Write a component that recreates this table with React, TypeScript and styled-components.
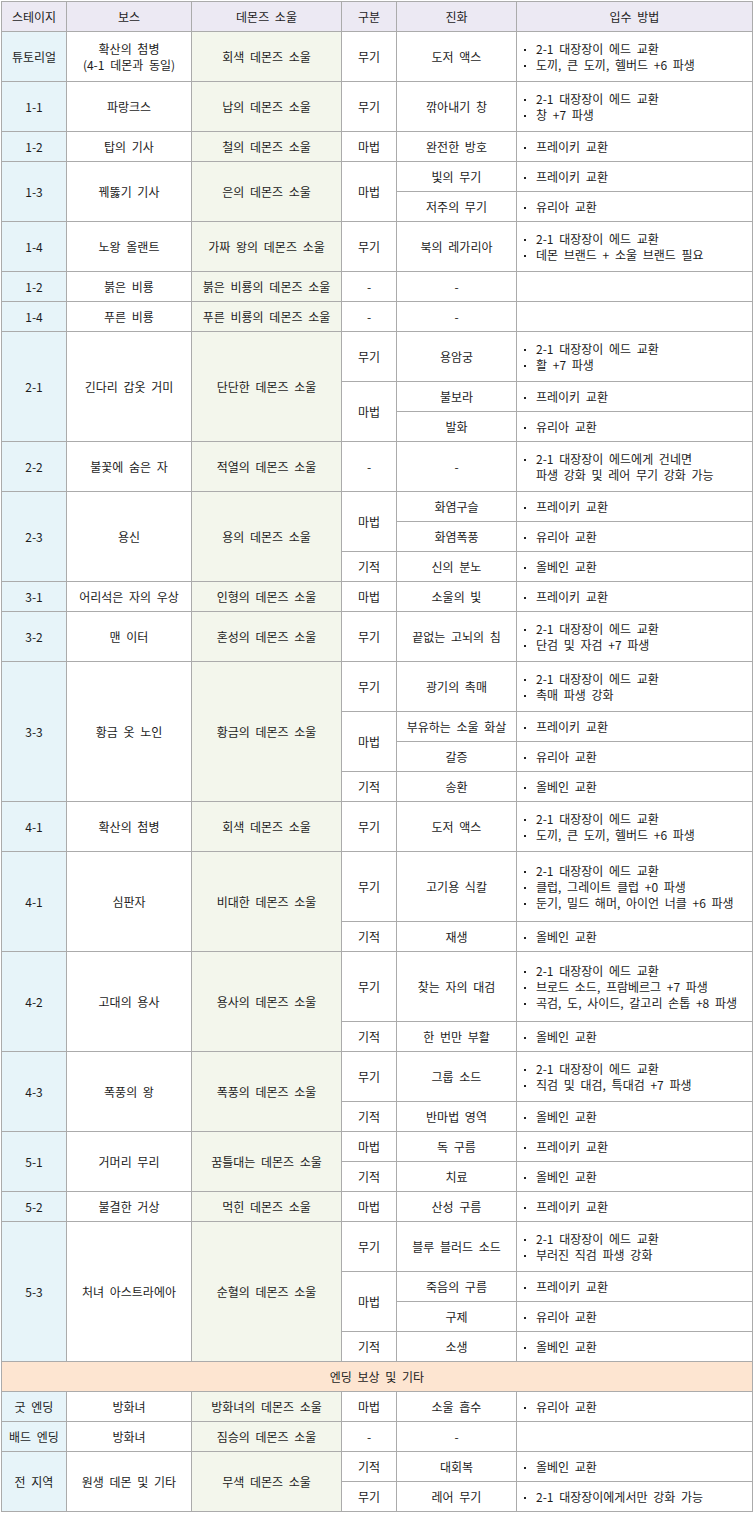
import React from "react";
import styled, { createGlobalStyle } from "styled-components";

type Sub = {
  kind?: string;
  kindSpan?: number;
  evo: string;
  how: string[];
  h: number;
};

type Group = {
  stage: string;
  boss: string[];
  soul: string;
  subs: Sub[];
};

const ED = "2-1 대장장이 에드 교환";

const groups: Group[] = [
  {
    stage: "튜토리얼",
    boss: ["확산의 첨병", "(4-1 데몬과 동일)"],
    soul: "회색 데몬즈 소울",
    subs: [{ kind: "무기", evo: "도저 액스", how: [ED, "도끼, 큰 도끼, 헬버드 +6 파생"], h: 50 }],
  },
  {
    stage: "1-1",
    boss: ["파랑크스"],
    soul: "납의 데몬즈 소울",
    subs: [{ kind: "무기", evo: "깎아내기 창", how: [ED, "창 +7 파생"], h: 50 }],
  },
  {
    stage: "1-2",
    boss: ["탑의 기사"],
    soul: "철의 데몬즈 소울",
    subs: [{ kind: "마법", evo: "완전한 방호", how: ["프레이키 교환"], h: 30 }],
  },
  {
    stage: "1-3",
    boss: ["꿰뚫기 기사"],
    soul: "은의 데몬즈 소울",
    subs: [
      { kind: "마법", kindSpan: 2, evo: "빛의 무기", how: ["프레이키 교환"], h: 30 },
      { evo: "저주의 무기", how: ["유리아 교환"], h: 30 },
    ],
  },
  {
    stage: "1-4",
    boss: ["노왕 올랜트"],
    soul: "가짜 왕의 데몬즈 소울",
    subs: [{ kind: "무기", evo: "북의 레가리아", how: [ED, "데몬 브랜드 + 소울 브랜드 필요"], h: 50 }],
  },
  {
    stage: "1-2",
    boss: ["붉은 비룡"],
    soul: "붉은 비룡의 데몬즈 소울",
    subs: [{ kind: "-", evo: "-", how: [], h: 30 }],
  },
  {
    stage: "1-4",
    boss: ["푸른 비룡"],
    soul: "푸른 비룡의 데몬즈 소울",
    subs: [{ kind: "-", evo: "-", how: [], h: 30 }],
  },
  {
    stage: "2-1",
    boss: ["긴다리 갑옷 거미"],
    soul: "단단한 데몬즈 소울",
    subs: [
      { kind: "무기", evo: "용암궁", how: [ED, "활 +7 파생"], h: 50 },
      { kind: "마법", kindSpan: 2, evo: "불보라", how: ["프레이키 교환"], h: 30 },
      { evo: "발화", how: ["유리아 교환"], h: 30 },
    ],
  },
  {
    stage: "2-2",
    boss: ["불꽃에 숨은 자"],
    soul: "적열의 데몬즈 소울",
    subs: [
      {
        kind: "-",
        evo: "-",
        how: ["2-1 대장장이 에드에게 건네면\n파생 강화 및 레어 무기 강화 가능"],
        h: 50,
      },
    ],
  },
  {
    stage: "2-3",
    boss: ["용신"],
    soul: "용의 데몬즈 소울",
    subs: [
      { kind: "마법", kindSpan: 2, evo: "화염구슬", how: ["프레이키 교환"], h: 30 },
      { evo: "화염폭풍", how: ["유리아 교환"], h: 30 },
      { kind: "기적", evo: "신의 분노", how: ["올베인 교환"], h: 30 },
    ],
  },
  {
    stage: "3-1",
    boss: ["어리석은 자의 우상"],
    soul: "인형의 데몬즈 소울",
    subs: [{ kind: "마법", evo: "소울의 빛", how: ["프레이키 교환"], h: 30 }],
  },
  {
    stage: "3-2",
    boss: ["맨 이터"],
    soul: "혼성의 데몬즈 소울",
    subs: [{ kind: "무기", evo: "끝없는 고뇌의 침", how: [ED, "단검 및 자검 +7 파생"], h: 50 }],
  },
  {
    stage: "3-3",
    boss: ["황금 옷 노인"],
    soul: "황금의 데몬즈 소울",
    subs: [
      { kind: "무기", evo: "광기의 촉매", how: [ED, "촉매 파생 강화"], h: 50 },
      { kind: "마법", kindSpan: 2, evo: "부유하는 소울 화살", how: ["프레이키 교환"], h: 30 },
      { evo: "갈증", how: ["유리아 교환"], h: 30 },
      { kind: "기적", evo: "송환", how: ["올베인 교환"], h: 30 },
    ],
  },
  {
    stage: "4-1",
    boss: ["확산의 첨병"],
    soul: "회색 데몬즈 소울",
    subs: [{ kind: "무기", evo: "도저 액스", how: [ED, "도끼, 큰 도끼, 헬버드 +6 파생"], h: 50 }],
  },
  {
    stage: "4-1",
    boss: ["심판자"],
    soul: "비대한 데몬즈 소울",
    subs: [
      {
        kind: "무기",
        evo: "고기용 식칼",
        how: [ED, "클럽, 그레이트 클럽 +0 파생", "둔기, 밀드 해머, 아이언 너클 +6 파생"],
        h: 70,
      },
      { kind: "기적", evo: "재생", how: ["올베인 교환"], h: 30 },
    ],
  },
  {
    stage: "4-2",
    boss: ["고대의 용사"],
    soul: "용사의 데몬즈 소울",
    subs: [
      {
        kind: "무기",
        evo: "찾는 자의 대검",
        how: [ED, "브로드 소드, 프람베르그 +7 파생", "곡검, 도, 사이드, 갈고리 손톱 +8 파생"],
        h: 70,
      },
      { kind: "기적", evo: "한 번만 부활", how: ["올베인 교환"], h: 30 },
    ],
  },
  {
    stage: "4-3",
    boss: ["폭풍의 왕"],
    soul: "폭풍의 데몬즈 소울",
    subs: [
      { kind: "무기", evo: "그룹 소드", how: [ED, "직검 및 대검, 특대검 +7 파생"], h: 50 },
      { kind: "기적", evo: "반마법 영역", how: ["올베인 교환"], h: 30 },
    ],
  },
  {
    stage: "5-1",
    boss: ["거머리 무리"],
    soul: "꿈틀대는 데몬즈 소울",
    subs: [
      { kind: "마법", evo: "독 구름", how: ["프레이키 교환"], h: 30 },
      { kind: "기적", evo: "치료", how: ["올베인 교환"], h: 30 },
    ],
  },
  {
    stage: "5-2",
    boss: ["불결한 거상"],
    soul: "먹힌 데몬즈 소울",
    subs: [{ kind: "마법", evo: "산성 구름", how: ["프레이키 교환"], h: 30 }],
  },
  {
    stage: "5-3",
    boss: ["처녀 아스트라에아"],
    soul: "순혈의 데몬즈 소울",
    subs: [
      { kind: "무기", evo: "블루 블러드 소드", how: [ED, "부러진 직검 파생 강화"], h: 50 },
      { kind: "마법", kindSpan: 2, evo: "죽음의 구름", how: ["프레이키 교환"], h: 30 },
      { evo: "구제", how: ["유리아 교환"], h: 30 },
      { kind: "기적", evo: "소생", how: ["올베인 교환"], h: 30 },
    ],
  },
];

const extras: Group[] = [
  {
    stage: "굿 엔딩",
    boss: ["방화녀"],
    soul: "방화녀의 데몬즈 소울",
    subs: [{ kind: "마법", evo: "소울 흡수", how: ["유리아 교환"], h: 30 }],
  },
  {
    stage: "배드 엔딩",
    boss: ["방화녀"],
    soul: "짐승의 데몬즈 소울",
    subs: [{ kind: "-", evo: "-", how: [], h: 30 }],
  },
  {
    stage: "전 지역",
    boss: ["원생 데몬 및 기타"],
    soul: "무색 데몬즈 소울",
    subs: [
      { kind: "기적", evo: "대회복", how: ["올베인 교환"], h: 30 },
      { kind: "무기", evo: "레어 무기", how: ["2-1 대장장이에게서만 강화 가능"], h: 30 },
    ],
  },
];

const GlobalStyle = createGlobalStyle`
  body {
    margin: 0;
    background: #fff;
    font-family: "Noto Sans CJK KR", "Noto Sans", sans-serif;
  }
`;

const Table = styled.table`
  margin: 1px 0 0 1px;
  width: 751px;
  table-layout: fixed;
  border-collapse: collapse;
  font-size: 12px;
  line-height: 16px;
  word-spacing: 3px;
  color: #1c1c1c;
`;

const Th = styled.th`
  height: 29px;
  padding: 0;
  border: 1px solid #ababab;
  background: #ece9f3;
  font-weight: normal;
  text-align: center;
`;

const Td = styled.td<{ $tone?: "stage" | "soul" | "plain" }>`
  padding: 0 4px;
  border: 1px solid #ababab;
  text-align: center;
  vertical-align: middle;
  background: ${(p) =>
    p.$tone === "stage" ? "#e7f4f9" : p.$tone === "soul" ? "#f3f6ec" : "#fff"};
`;

const HowCell = styled.td`
  padding: 0 2px 0 7px;
  border: 1px solid #ababab;
  text-align: left;
  vertical-align: middle;
  background: #fff;
`;

const Section = styled.td`
  height: 29px;
  padding: 0;
  border: 1px solid #ababab;
  background: #fde5d1;
  text-align: center;
`;

const List = styled.ul`
  margin: 0;
  padding: 0;
  list-style: none;
`;

const Item = styled.li`
  display: flex;
  align-items: flex-start;
  white-space: pre-line;

  &::before {
    content: "";
    flex-shrink: 0;
    width: 2px;
    height: 2px;
    margin: 8px 10px 0 0;
    background: #222;
  }
`;

const Row = styled.tr<{ $h: number }>`
  height: ${(p) => p.$h}px;
`;

const GroupRows = ({ g }: { g: Group }) => {
  const span = g.subs.length;
  return (
    <>
      {g.subs.map((s, i) => (
        <Row key={i} $h={s.h}>
          {i === 0 && (
            <>
              <Td $tone="stage" rowSpan={span}>
                {g.stage}
              </Td>
              <Td rowSpan={span}>
                {g.boss.map((b, j) => (
                  <div key={j}>{b}</div>
                ))}
              </Td>
              <Td $tone="soul" rowSpan={span}>
                {g.soul}
              </Td>
            </>
          )}
          {s.kind !== undefined && <Td rowSpan={s.kindSpan ?? 1}>{s.kind}</Td>}
          <Td>{s.evo}</Td>
          <HowCell>
            {s.how.length > 0 && (
              <List>
                {s.how.map((t, j) => (
                  <Item key={j}>
                    <span>{t}</span>
                  </Item>
                ))}
              </List>
            )}
          </HowCell>
        </Row>
      ))}
    </>
  );
};

export default function App() {
  return (
    <>
      <GlobalStyle />
      <Table>
        <colgroup>
          <col style={{ width: 65 }} />
          <col style={{ width: 125 }} />
          <col style={{ width: 150 }} />
          <col style={{ width: 55 }} />
          <col style={{ width: 120 }} />
          <col style={{ width: 236 }} />
        </colgroup>
        <thead>
          <tr>
            <Th>스테이지</Th>
            <Th>보스</Th>
            <Th>데몬즈 소울</Th>
            <Th>구분</Th>
            <Th>진화</Th>
            <Th>입수 방법</Th>
          </tr>
        </thead>
        <tbody>
          {groups.map((g, i) => (
            <GroupRows key={i} g={g} />
          ))}
          <tr>
            <Section colSpan={6}>엔딩 보상 및 기타</Section>
          </tr>
          {extras.map((g, i) => (
            <GroupRows key={i} g={g} />
          ))}
        </tbody>
      </Table>
    </>
  );
}
